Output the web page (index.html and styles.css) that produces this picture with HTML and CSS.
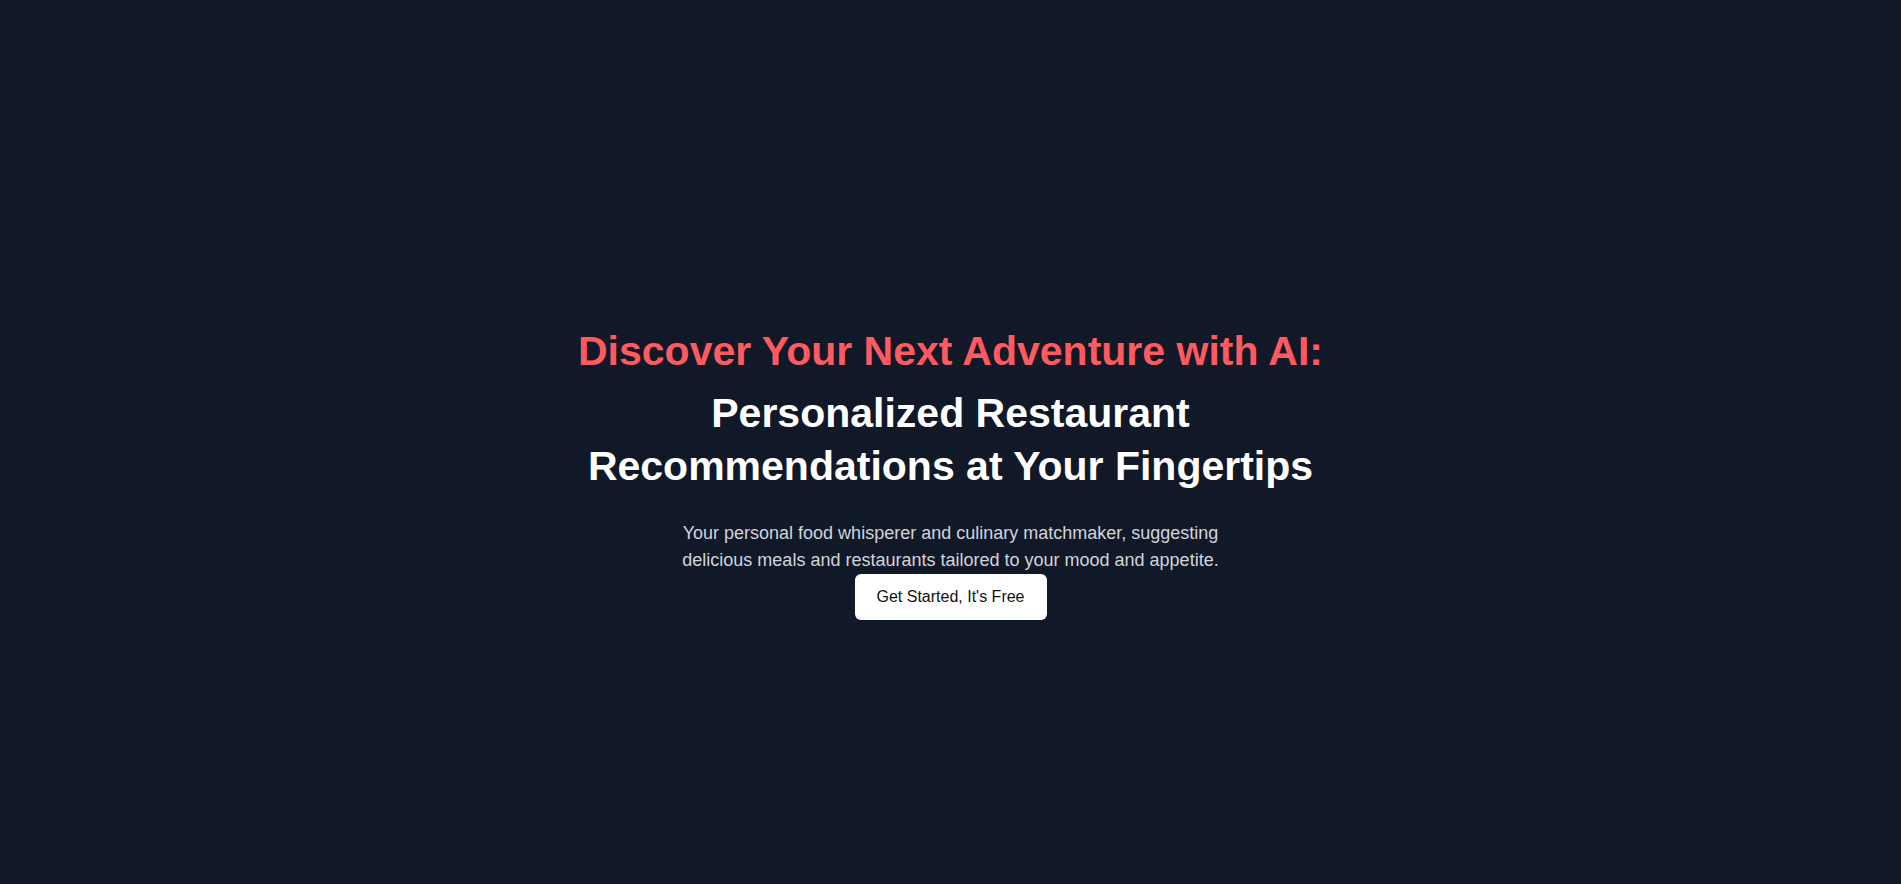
FILE: index.html
```html
<!DOCTYPE html>
<html lang="en">
<head>
<meta charset="utf-8">
<title>Discover Your Next Adventure with AI</title>
<link rel="stylesheet" href="styles.css">
</head>
<body>
<main class="hero">
  <h1 class="hero-title">Discover Your Next Adventure with AI:</h1>
  <h2 class="hero-subtitle">Personalized Restaurant Recommendations at Your Fingertips</h2>
  <p class="hero-text">Your personal food whisperer and culinary matchmaker, suggesting delicious meals and restaurants tailored to your mood and appetite.</p>
  <a class="hero-button" href="#">Get Started, It's Free</a>
</main>
</body>
</html>
```

FILE: styles.css
```css
* {
  box-sizing: border-box;
}

html, body {
  margin: 0;
  padding: 0;
  background: #111827;
}

body {
  font-family: "Liberation Sans", Arial, sans-serif;
  min-height: 884px;
}

.hero {
  display: flex;
  flex-direction: column;
  align-items: center;
  text-align: center;
  padding-top: 327px;
  min-height: 884px;
}

.hero-title {
  margin: 0 0 12px;
  font-size: 41px;
  line-height: 48px;
  font-weight: 700;
  color: #ff5a5f;
}

.hero-subtitle {
  margin: 0;
  max-width: 768px;
  font-size: 41px;
  line-height: 53px;
  font-weight: 700;
  color: #ffffff;
}

.hero-text {
  margin: 27px 0 0;
  max-width: 576px;
  font-size: 18px;
  line-height: 27px;
  color: #d1d5db;
}

.hero-button {
  display: inline-block;
  padding: 11px 22px;
  font-size: 16px;
  line-height: 24px;
  color: #111111;
  background: #ffffff;
  border-radius: 6px;
  text-decoration: none;
}
```
